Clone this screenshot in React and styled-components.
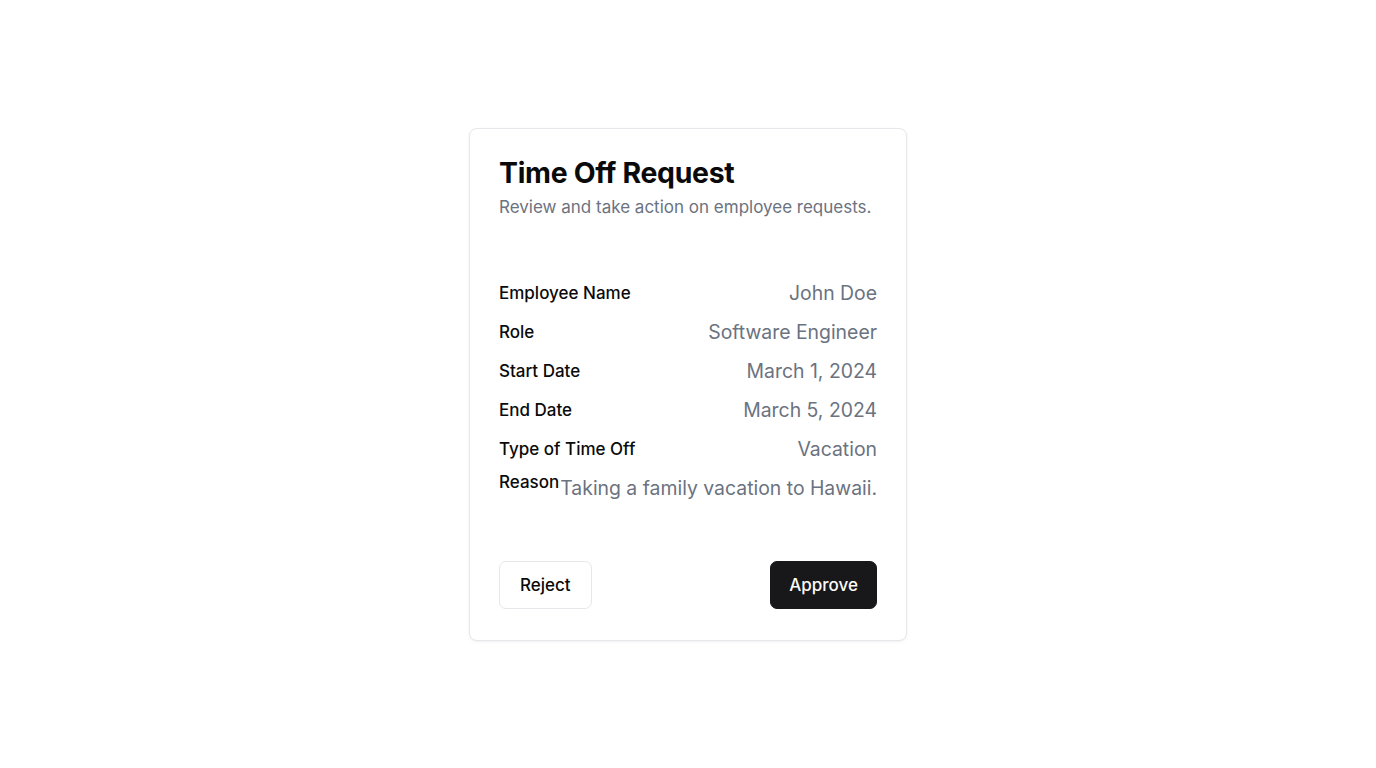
import React from "react";
import styled, { createGlobalStyle } from "styled-components";

const Global = createGlobalStyle`
  html, body { margin: 0; padding: 0; background: #ffffff; }
  body { font-family: Inter, "Noto Sans", sans-serif; color: #0a0a0a; }
  * { box-sizing: border-box; }
`;

const Page = styled.div`
  min-height: 768px;
  display: flex;
  align-items: center;
  justify-content: center;
`;

const Card = styled.div`
  width: 438px;
  border: 1px solid #e5e7eb;
  border-radius: 8px;
  background: #fff;
  box-shadow: 0 1px 3px rgba(0, 0, 0, 0.06);
  padding: 29px 29px 31px;
  display: flex;
  flex-direction: column;
`;

const Header = styled.div`
  display: flex;
  flex-direction: column;
  gap: 6px;
`;

const Title = styled.h2`
  margin: 0;
  font-size: 28.4px;
  line-height: 30px;
  font-weight: 700;
  letter-spacing: -0.3px;
  color: #0a0a0a;
`;

const Subtitle = styled.p`
  margin: 0;
  font-size: 17px;
  line-height: 26px;
  color: #6b7280;
`;

const Details = styled.div`
  display: flex;
  flex-direction: column;
  gap: 11px;
  margin-top: 59px;
`;

const Row = styled.div`
  display: flex;
  justify-content: space-between;
  align-items: ${(p) => (p.$top ? "flex-start" : "center")};
  margin-top: ${(p) => (p.$top ? "-4px" : "0")};
`;

const Label = styled.span`
  font-size: 17px;
  line-height: 24px;
  font-weight: 500;
  color: #0a0a0a;
  white-space: nowrap;
`;

const Value = styled.span`
  font-size: 19.4px;
  line-height: 28px;
  color: #6b7280;
  text-align: right;
  white-space: nowrap;
  padding-top: ${(p) => (p.$top ? "4px" : "0")};
`;

const Actions = styled.div`
  display: flex;
  justify-content: space-between;
  margin-top: 59px;
`;

const Button = styled.button`
  height: 48px;
  padding: 0 ${(p) => (p.$primary ? "18px" : "20px")};
  border-radius: 7px;
  font-family: Inter, "Noto Sans", sans-serif;
  font-size: 17px;
  font-weight: 500;
  cursor: pointer;
  border: 1px solid ${(p) => (p.$primary ? "#18181b" : "#e5e7eb")};
  background: ${(p) => (p.$primary ? "#18181b" : "#ffffff")};
  color: ${(p) => (p.$primary ? "#fafafa" : "#0a0a0a")};
`;

const rows = [
  ["Employee Name", "John Doe"],
  ["Role", "Software Engineer"],
  ["Start Date", "March 1, 2024"],
  ["End Date", "March 5, 2024"],
  ["Type of Time Off", "Vacation"],
];

export default function App() {
  return (
    <>
      <Global />
      <Page>
        <Card>
          <Header>
            <Title>Time Off Request</Title>
            <Subtitle>Review and take action on employee requests.</Subtitle>
          </Header>
          <Details>
            {rows.map(([l, v]) => (
              <Row key={l}>
                <Label>{l}</Label>
                <Value>{v}</Value>
              </Row>
            ))}
            <Row $top>
              <Label>Reason</Label>
              <Value $top>Taking a family vacation to Hawaii.</Value>
            </Row>
          </Details>
          <Actions>
            <Button>Reject</Button>
            <Button $primary>Approve</Button>
          </Actions>
        </Card>
      </Page>
    </>
  );
}
